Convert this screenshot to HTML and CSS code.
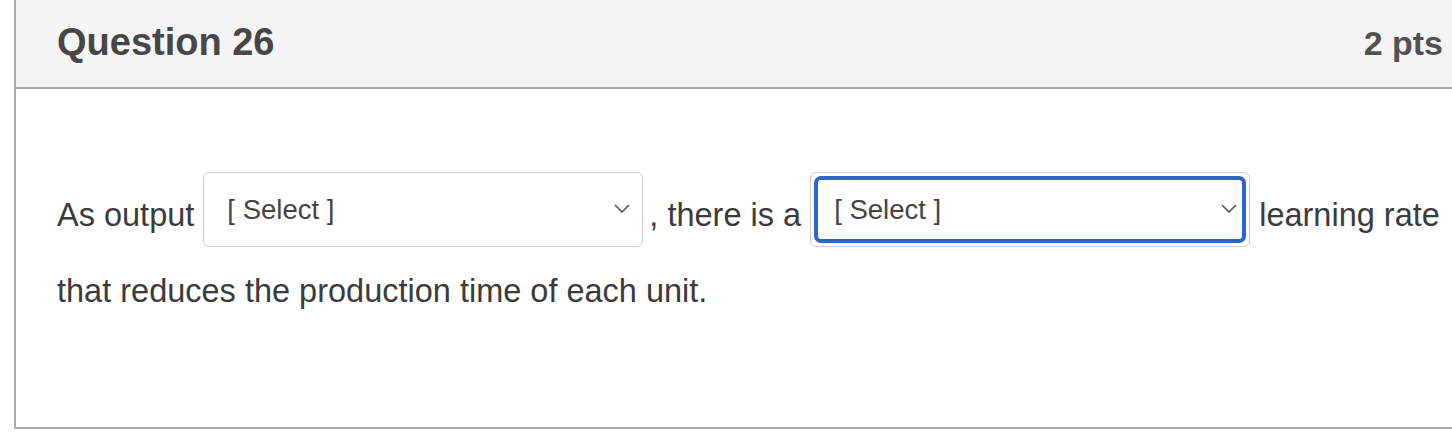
FILE: index.html
```html
<!DOCTYPE html>
<html lang="en">
<head>
<meta charset="utf-8">
<title>Question 26</title>
<link rel="stylesheet" href="styles.css">
</head>
<body>
<div class="panel">
  <div class="panel-header">
    <h2 class="question-title">Question 26</h2>
    <span class="points">2 pts</span>
  </div>
  <div class="panel-body">
    <p class="question-text"><span class="run">As output</span> <span class="select select-first"><span class="select-inner"><span class="select-label">[ Select ]</span><svg class="chevron" width="16" height="9" viewBox="0 0 16 9"><path d="M1 1 L8 8 L15 1" fill="none" stroke="#555" stroke-width="1.6"/></svg></span></span><span class="run">, there is a</span> <span class="select select-focus"><span class="select-inner"><span class="select-label">[ Select ]</span><svg class="chevron" width="16" height="9" viewBox="0 0 16 9"><path d="M1 1 L8 8 L15 1" fill="none" stroke="#555" stroke-width="1.6"/></svg></span></span> <span class="run">learning rate</span> <span class="run">that reduces the production time of each unit.</span></p>
  </div>
</div>
</body>
</html>
```

FILE: styles.css
```css
html, body {
  margin: 0;
  padding: 0;
  background: #ffffff;
  overflow: hidden;
}

body {
  font-family: "Liberation Sans", Arial, Helvetica, sans-serif;
  width: 1452px;
  height: 444px;
}

.panel {
  margin-left: 14px;
  margin-right: -2px;
  border: 2px solid #aaaaaa;
  border-top: 0;
  background: #ffffff;
}

.panel-header {
  display: flex;
  justify-content: space-between;
  align-items: baseline;
  box-sizing: border-box;
  height: 89px;
  padding: 21px 9px 0 41px;
  background: #f5f5f5;
  border-bottom: 2px solid #aaaaaa;
}

.question-title {
  margin: 0;
  font-size: 38px;
  font-weight: bold;
  color: #474747;
}

.points {
  font-size: 34px;
  font-weight: bold;
  color: #515151;
}

.panel-body {
  padding: 83px 12px 117px 41px;
}

.question-text {
  margin: 0;
  font-size: 32.5px;
  line-height: normal;
  color: #3b3b3b;
}

.select {
  display: inline-flex;
  box-sizing: border-box;
  width: 440px;
  height: 75px;
  margin-bottom: 26px;
  padding: 3px;
  border: 1px solid #cccccc;
  border-radius: 6px;
  background: #ffffff;
  vertical-align: 7px;
  font-size: 27.5px;
  line-height: 1;
  color: #444444;
}

.select-inner {
  flex: 1;
  display: flex;
  align-items: center;
  justify-content: space-between;
  padding: 0 5px 0 16px;
  border: 4px solid transparent;
  border-radius: 7px;
}

.select-first {
  margin-right: 6px;
}

.select-focus .select-inner {
  border-color: #2b66c8;
}

.chevron {
  flex: none;
  margin-top: -3px;
}
```
